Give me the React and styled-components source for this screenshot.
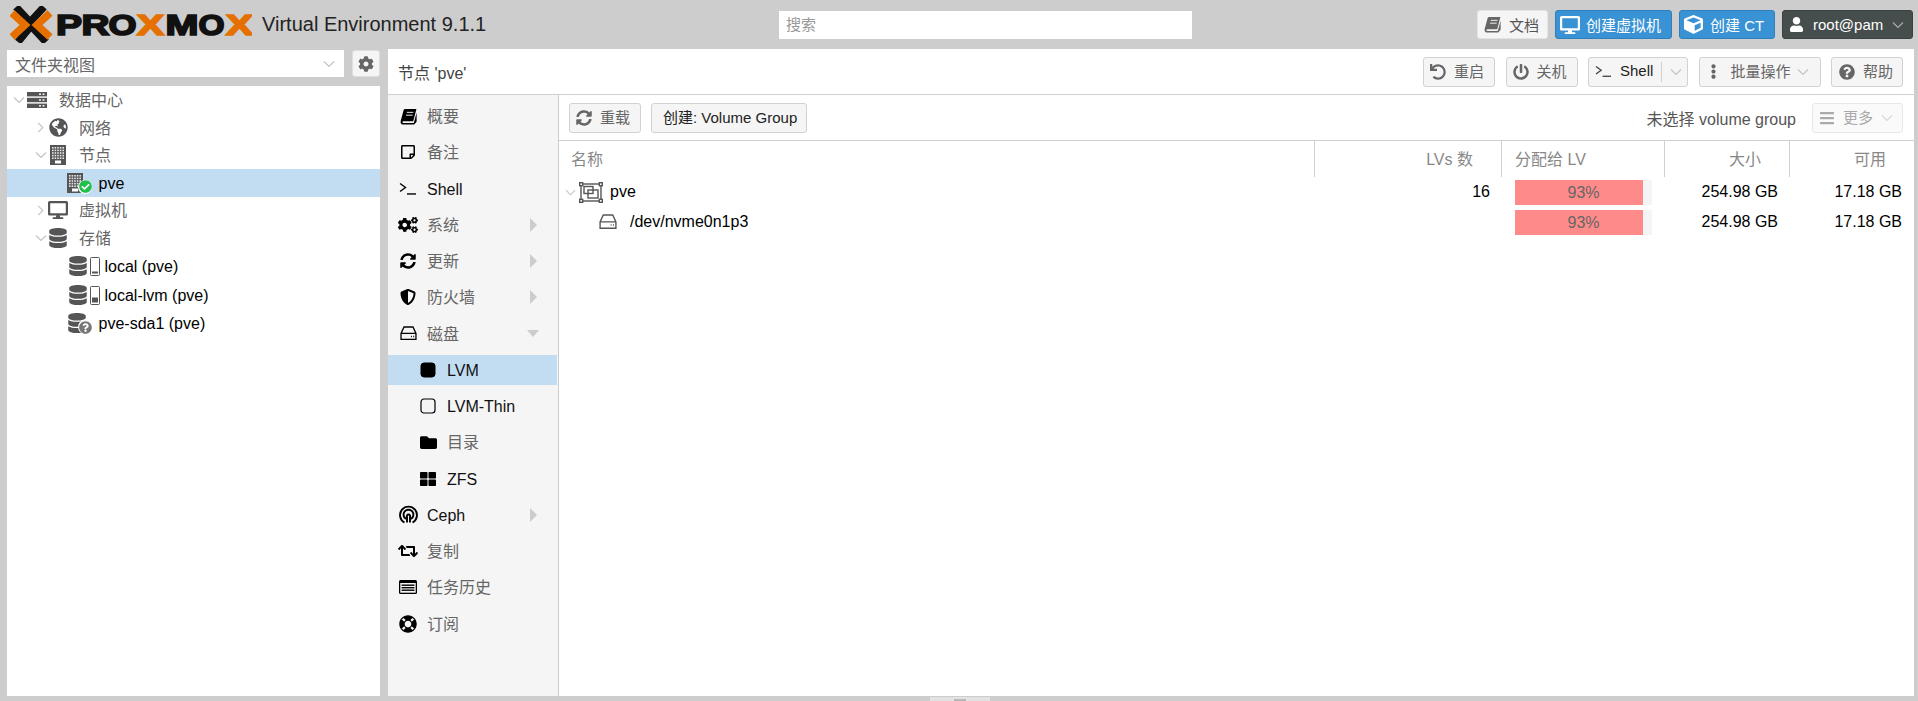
import React from "react"
import styled, { createGlobalStyle } from "styled-components"
import {
  FaDesktop,
  FaCube,
  FaUser,
  FaCog,
  FaCogs,
  FaGlobeAmericas,
  FaDatabase,
  FaSyncAlt,
  FaUndo,
  FaPowerOff,
  FaEllipsisV,
  FaQuestionCircle,
  FaBars,
  FaShieldAlt,
  FaFolder,
  FaThLarge,
  FaRetweet,
  FaLifeRing,
  FaRegStickyNote,
  FaCheckCircle,
} from "react-icons/fa"

const GlobalStyle = createGlobalStyle`
  html, body {
    margin: 0;
    padding: 0;
    background: #cdcdcd;
  }
  * {
    box-sizing: border-box;
  }
`

const Page = styled.div`
  position: relative;
  width: 1918px;
  height: 701px;
  overflow: hidden;
  background: #cdcdcd;
  font-family: "Liberation Sans", "Noto Sans CJK SC", sans-serif;
  font-size: 16px;
  color: #000;
  display: flex;
  flex-direction: column;
`

const TopBar = styled.header`
  height: 49px;
  flex: none;
  display: flex;
  align-items: center;
  padding: 0 5px 0 10px;
`

const LogoSvg = styled.svg`
  width: 242px;
  height: 37px;
  flex: none;
`

const ProductName = styled.div`
  width: 527px;
  flex: none;
  padding-left: 10px;
  font-size: 20px;
  color: #222;
`

const SearchBox = styled.div`
  width: 413px;
  height: 28px;
  background: #fff;
  padding: 0 7px;
  line-height: 28px;
  color: #999;
  font-size: 15px;
`

const TopActions = styled.div`
  margin-left: auto;
  display: flex;
  gap: 7px;
`

const TopButton = styled.div`
  height: 29px;
  width: ${(p) => p.$w}px;
  display: flex;
  align-items: center;
  gap: ${(p) => p.$gap || 8}px;
  padding-left: ${(p) => p.$pad || 6}px;
  border-radius: 3px;
  border: 1px solid ${(p) => (p.$kind === "primary" ? "#2f7fbd" : p.$kind === "dark" ? "#3c4242" : "#e4e4e4")};
  background: ${(p) => (p.$kind === "primary" ? "#3892d4" : p.$kind === "dark" ? "#464d4d" : "#f5f5f5")};
  color: ${(p) => (p.$kind === "primary" || p.$kind === "dark" ? "#fff" : "#555")};
  font-size: 15px;
  white-space: nowrap;
  svg {
    flex: none;
  }
`

const Content = styled.div`
  flex: 1;
  min-height: 0;
  display: flex;
  padding: 0 4px 5px 7px;
  gap: 8px;
`

const LeftColumn = styled.aside`
  width: 373px;
  flex: none;
  display: flex;
  flex-direction: column;
  padding-top: 1px;
`

const ViewRow = styled.div`
  height: 27px;
  flex: none;
  display: flex;
  justify-content: space-between;
`

const ViewSelect = styled.div`
  width: 337px;
  background: #fff;
  display: flex;
  align-items: center;
  justify-content: space-between;
  padding: 0 9px 0 8px;
  color: #666;
`

const GearButton = styled.div`
  width: 28px;
  background: #f5f5f5;
  border: 1px solid #dedede;
  border-radius: 3px;
  display: flex;
  align-items: center;
  justify-content: center;
  color: #666;
`

const Tree = styled.div`
  flex: 1;
  margin-top: 9px;
  background: #fff;
  padding-top: 0.5px;
`

const TreeRow = styled.div`
  height: ${(p) => (p.$tall ? 29 : 27.5)}px;
  display: flex;
  align-items: center;
  padding-left: ${(p) => p.$pad}px;
  background: ${(p) => (p.$selected ? "#c2ddf2" : "transparent")};
`

const ChevronSlot = styled.span`
  width: ${(p) => p.$w}px;
  flex: none;
  display: flex;
  align-items: center;
`

const IconSlot = styled.span`
  position: relative;
  width: ${(p) => p.$w}px;
  margin-left: ${(p) => p.$offset || 0}px;
  height: 22px;
  flex: none;
  display: flex;
  align-items: center;
  justify-content: ${(p) => p.$align || "center"};
  color: ${(p) => p.$color || "#555"};
`

const Badge = styled.span`
  position: absolute;
  right: -1px;
  bottom: 0;
  width: 14px;
  height: 14px;
  border-radius: 50%;
  background: #fff;
  display: flex;
  align-items: center;
  justify-content: center;
  color: ${(p) => p.$color};
`

// Chinese glyphs sit lower than the Latin ones in this font stack, the padding evens them out
const RowLabel = styled.span`
  margin-left: ${(p) => p.$gap}px;
  white-space: nowrap;
  color: ${(p) => (p.$zh ? "#666" : "#000")};
  padding-${(p) => (p.$zh ? "bottom" : "top")}: 2px;
`

const CellLabel = styled.span`
  margin-left: ${(p) => p.$gap}px;
  white-space: nowrap;
`

const MainPanel = styled.main`
  flex: 1;
  min-width: 0;
  background: #fff;
  display: flex;
  flex-direction: column;
`

const TitleBar = styled.div`
  height: 46px;
  flex: none;
  display: flex;
  align-items: center;
  justify-content: space-between;
  padding: 0 11px 0 10px;
  border-bottom: 1px solid #d0d0d0;
`

const Title = styled.div`
  color: #444;
`

const ButtonRow = styled.div`
  display: flex;
  gap: ${(p) => p.$gap || 10}px;
`

const ToolButton = styled.div`
  height: 30px;
  width: ${(p) => p.$w}px;
  display: flex;
  align-items: center;
  gap: ${(p) => p.$gap || 8}px;
  padding-left: ${(p) => p.$pad || 6}px;
  border: 1px solid #d2d2d2;
  border-radius: 3px;
  background: ${(p) => (p.$disabled ? "#fafafa" : "#f5f5f5")};
  color: ${(p) => (p.$disabled ? "#aaa" : p.$muted ? "#666" : "#222")};
  font-size: 15px;
  white-space: nowrap;
  border-color: ${(p) => (p.$disabled ? "#e8e8e8" : "#d2d2d2")};
  svg {
    flex: none;
    color: ${(p) => (p.$disabled ? "#aaa" : "#666")};
  }
`

const ButtonText = styled.span`
  padding-bottom: 2px;
`

const ButtonDivider = styled.span`
  width: 1px;
  height: 20px;
  background: #d0d0d0;
`

const CaretSlot = styled.span`
  display: flex;
  margin-left: ${(p) => p.$shift || 0}px;
`

const Body = styled.div`
  flex: 1;
  min-height: 0;
  display: flex;
`

const Nav = styled.nav`
  width: 171px;
  flex: none;
  background: #f5f5f5;
  border-right: 1px solid #cdcdcd;
  padding-top: 6px;
  display: flex;
  flex-direction: column;
  gap: 6.25px;
`

const NavItem = styled.div`
  position: relative;
  height: 30px;
  flex: none;
  width: 169px;
  display: flex;
  align-items: center;
  padding-left: ${(p) => (p.$sub ? 30 : 10)}px;
  background: ${(p) => (p.$selected ? "#c2ddf2" : "transparent")};
`

const NavIcon = styled.span`
  width: 20px;
  flex: none;
  display: flex;
  justify-content: center;
  color: #000;
`

const NavLabel = styled.span`
  margin-left: 9px;
  color: ${(p) => (p.$zh ? "#666" : "#111")};
  padding-${(p) => (p.$zh ? "bottom" : "top")}: 2px;
`

const NavArrow = styled.span`
  position: absolute;
  width: 0;
  height: 0;
  ${(p) =>
    p.$open
      ? `left: 139px; border-left: 6px solid transparent; border-right: 6px solid transparent; border-top: 7px solid #ccc;`
      : `left: 142px; border-top: 7px solid transparent; border-bottom: 7px solid transparent; border-left: 7px solid #ccc;`}
`

const GridArea = styled.section`
  flex: 1;
  min-width: 0;
  display: flex;
  flex-direction: column;
`

const Toolbar = styled.div`
  height: 46px;
  flex: none;
  display: flex;
  align-items: center;
  justify-content: space-between;
  padding: 0 11px 0 10px;
  border-bottom: 1px solid #d0d0d0;
`

const ToolbarRight = styled.div`
  display: flex;
  align-items: center;
  gap: 16px;
  color: #555;
`

const columns = "756px 187px 163px 125px 124px"

const GridHeader = styled.div`
  height: 36px;
  flex: none;
  display: grid;
  grid-template-columns: ${columns};
`

const HeaderCell = styled.div`
  display: flex;
  align-items: center;
  justify-content: ${(p) => (p.$right ? "flex-end" : "flex-start")};
  padding: ${(p) => (p.$right ? "0 28px 2px 0" : `0 0 2px ${p.$pad}px`)};
  color: #888;
  border-right: ${(p) => (p.$last ? "none" : "1px solid #d0d0d0")};
`

const GridRow = styled.div`
  height: 30px;
  display: grid;
  grid-template-columns: ${columns};
  align-items: center;
`

const NameCell = styled.div`
  display: flex;
  align-items: center;
  padding-left: ${(p) => p.$pad}px;
`

const ValueCell = styled.div`
  text-align: right;
  padding-right: 12px;
`

const BarCell = styled.div`
  padding-left: 13px;
`

const Bar = styled.div`
  position: relative;
  width: 137px;
  height: 25px;
  background: #f5f5f5;
`

const BarFill = styled.div`
  height: 100%;
  background: #ff8a8a;
`

const BarText = styled.span`
  position: absolute;
  left: 0;
  right: 0;
  top: 0;
  line-height: 25px;
  text-align: center;
  color: #666;
`

const SplitHandle = styled.div`
  position: absolute;
  left: 930px;
  top: 697px;
  width: 60px;
  height: 4px;
  background: #e2e2e2;
  display: flex;
  justify-content: center;
  padding-top: 2px;
`

const SplitGrip = styled.span`
  width: 12px;
  height: 2px;
  background: #b8b8b8;
`

const Chevron = ({ dir = "down", size = 12, color = "#c4c4c4" }) => (
  <svg width={size} height={size} viewBox="0 0 12 12" fill="none" stroke={color} strokeWidth="1.2">
    {dir === "down" ? <polyline points="1,3.5 6,8.5 11,3.5" /> : <polyline points="3.5,1 8.5,6 3.5,11" />}
  </svg>
)

const ShellIcon = ({ size = 18, color = "#000" }) => (
  <svg width={size} height={size * 0.72} viewBox="0 0 18 13" fill="none" stroke={color} strokeWidth="1.4">
    <polyline points="1,1.5 6.5,5.5 1,9.5" />
    <line x1="8" y1="12" x2="17" y2="12" />
  </svg>
)

const BookIcon = ({ size = 17, color = "#000", ink = "#f5f5f5" }) => (
  <svg width={size} height={size} viewBox="0 0 18 18">
    <path
      d="M5.6 1H17.4L14 14H3.7C2.3 14 2.1 15.9 3.6 15.9H14.6L17.6 5V14.6L15 17.5H3C1 17.5 .2 15.5 .8 13.5L3.8 2.5C4 1.6 4.7 1 5.6 1Z"
      fill={color}
    />
    <path d="M7.2 4.6H14.2M6.4 7.6H13.4" stroke={ink} strokeWidth="1" />
  </svg>
)

const HddIcon = ({ size = 17, color = "currentColor" }) => (
  <svg width={size} height={size * 0.85} viewBox="0 0 17 14.5" fill="none" stroke={color} strokeWidth="1.3">
    <path d="M4 1H13L16 7.5V13.5H1V7.5L4 1ZM1 7.5H16" />
    <path d="M11 10.5H11.9M13.3 10.5H14.2" strokeWidth="1.4" />
  </svg>
)

const ServerIcon = () => (
  <svg width="20" height="16" viewBox="0 0 20 16">
    {[0, 5.8, 11.6].map((y) => (
      <g key={y}>
        <rect y={y} width="20" height="4.4" fill="#555" />
        <rect x="12" y={y + 1.5} width="2" height="1.4" fill="#fff" />
        <rect x="15.5" y={y + 1.5} width="2" height="1.4" fill="#fff" />
      </g>
    ))}
  </svg>
)

const TaskListIcon = () => (
  <svg width="18" height="14" viewBox="0 0 18 14">
    <rect width="18" height="14" rx="1.5" fill="#000" />
    <rect x="1.3" y="3" width="15.4" height="9.7" fill="#f5f5f5" />
    {[4.5, 7, 9.5].map((y) => (
      <rect key={y} x="2.6" y={y} width="12.8" height="1.4" fill="#000" />
    ))}
  </svg>
)

const NodeBuilding = ({ w = 16, h = 20 }) => (
  <svg width={w} height={h} viewBox="0 0 16 20">
    <rect width="16" height="20" fill="#555" />
    {[2, 4.6, 7.2, 9.8, 12.4].map((y) =>
      [2, 4.6, 7.2, 9.8, 12.4].map((x) => (
        <rect key={`${x}-${y}`} x={x} y={y} width="1.6" height="1.6" fill="#fff" opacity="0.85" />
      )),
    )}
    <rect x="5" y="15.5" width="6" height="3" fill="#fff" />
  </svg>
)

const StorageBar = ({ fill }) => (
  <svg width="10" height="19" viewBox="0 0 10 19">
    <rect x="0.5" y="0.5" width="9" height="18" rx="1" fill="#fff" stroke="#555" />
    <rect x="2" y={16.5 - fill} width="6" height={fill} fill="#555" />
  </svg>
)

const VolumeGroupIcon = () => (
  <svg width="24" height="21" viewBox="0 0 24 21" fill="none" stroke="#555" strokeWidth="1.4">
    <rect x="2" y="2" width="20" height="17" />
    <rect x="5" y="4.5" width="9" height="7" />
    <rect x="9" y="8" width="10" height="8" />
    {[
      [0.7, 0.7],
      [20.3, 0.7],
      [0.7, 17.3],
      [20.3, 17.3],
    ].map(([x, y]) => (
      <rect key={`${x}-${y}`} x={x} y={y} width="3" height="3" fill="#fff" />
    ))}
  </svg>
)

const CephIcon = () => (
  <svg width="19" height="19" viewBox="0 0 18 18" fill="none" stroke="#000" strokeWidth="1.8">
    <path d="M5.2 16.6A8 8 0 1 1 12.8 16.6" />
    <path d="M6.6 13.2A4.7 4.7 0 1 1 11.4 13.2" />
    <path d="M7.6 16.6V11.4A1.6 1.6 0 1 1 10.4 11.4V16.6" />
  </svg>
)

const RoundedSquare = ({ filled }) => (
  <svg width="16" height="16" viewBox="0 0 16 16">
    <rect
      x="1"
      y="1"
      width="14"
      height="14"
      rx="3"
      fill={filled ? "#000" : "none"}
      stroke="#000"
      strokeWidth={filled ? 1 : 1.2}
    />
  </svg>
)

const logoLetters = [
  ["P", 56, 26, "#111"],
  ["R", 81.5, 28, "#111"],
  ["O", 108.5, 28, "#111"],
  ["X", 137, 27, "#e57000"],
  ["M", 165.5, 33, "#111"],
  ["O", 198.5, 26, "#111"],
  ["X", 226, 27, "#e57000"],
]

const Logo = () => (
  <LogoSvg viewBox="10 5 242 37">
    <g fill="none" strokeWidth="7.5">
      <polyline points="16,6 30,21 44,6" stroke="#111" />
      <polyline points="18,41 31,25 46,41" stroke="#111" />
      <polyline points="12,12 25,24 12,36" stroke="#e57000" />
      <polyline points="50,12 37,24 50,36" stroke="#e57000" />
    </g>
    {logoLetters.map(([ch, x, w, color]) => (
      <text
        key={x}
        x={x}
        y="34"
        fontFamily="Liberation Sans"
        fontWeight="700"
        fontSize="29"
        fill={color}
        stroke={color}
        strokeWidth="1.7"
        textLength={w}
        lengthAdjust="spacingAndGlyphs"
      >
        {ch}
      </text>
    ))}
  </LogoSvg>
)

const treeRows = [
  { label: "数据中心", zh: true, pad: 6, chev: "down", chevW: 14, iconW: 20, gap: 12, icon: <ServerIcon /> },
  { label: "网络", zh: true, pad: 28, chev: "right", chevW: 13, iconW: 20, gap: 11, icon: <FaGlobeAmericas size={19} /> },
  { label: "节点", zh: true, pad: 28, chev: "down", chevW: 13, iconW: 20, gap: 11, icon: <NodeBuilding /> },
  {
    label: "pve",
    pad: 60,
    iconW: 24,
    gap: 7.5,
    selected: true,
    icon: <NodeBuilding />,
    align: "flex-start",
    badge: <FaCheckCircle size={13} />,
    badgeColor: "#21bf4b",
  },
  { label: "虚拟机", zh: true, pad: 28, chev: "right", chevW: 13, iconW: 20, gap: 11, icon: <FaDesktop size={22} /> },
  { label: "存储", zh: true, pad: 28, chev: "down", chevW: 13, iconW: 20, gap: 11, icon: <FaDatabase size={20} /> },
  {
    label: "local (pve)",
    pad: 61,
    iconW: 32,
    gap: 4.5,
    tall: true,
    align: "space-between",
    icon: (
      <>
        <FaDatabase size={20} />
        <StorageBar fill={2} />
      </>
    ),
  },
  {
    label: "local-lvm (pve)",
    pad: 61,
    iconW: 32,
    gap: 4.5,
    tall: true,
    align: "space-between",
    icon: (
      <>
        <FaDatabase size={20} />
        <StorageBar fill={5} />
      </>
    ),
  },
  {
    label: "pve-sda1 (pve)",
    pad: 60,
    iconW: 24,
    gap: 7.5,
    align: "flex-start",
    icon: <FaDatabase size={20} />,
    badge: <FaQuestionCircle size={13} />,
    badgeColor: "#777",
  },
]

const navItems = [
  { label: "概要", zh: true, icon: <BookIcon /> },
  { label: "备注", zh: true, icon: <FaRegStickyNote size={16} /> },
  { label: "Shell", icon: <ShellIcon /> },
  { label: "系统", zh: true, icon: <FaCogs size={20} />, arrow: "right" },
  { label: "更新", zh: true, icon: <FaSyncAlt size={16} />, arrow: "right" },
  { label: "防火墙", zh: true, icon: <FaShieldAlt size={16} />, arrow: "right" },
  { label: "磁盘", zh: true, icon: <HddIcon />, arrow: "open" },
  { label: "LVM", sub: true, selected: true, icon: <RoundedSquare filled /> },
  { label: "LVM-Thin", sub: true, icon: <RoundedSquare /> },
  { label: "目录", zh: true, sub: true, icon: <FaFolder size={17} /> },
  { label: "ZFS", sub: true, icon: <FaThLarge size={16} /> },
  { label: "Ceph", icon: <CephIcon />, arrow: "right" },
  { label: "复制", zh: true, icon: <FaRetweet size={20} /> },
  { label: "任务历史", zh: true, icon: <TaskListIcon /> },
  { label: "订阅", zh: true, icon: <FaLifeRing size={18} /> },
]

export default function App() {
  return (
    <Page>
      <GlobalStyle />
      <TopBar>
        <Logo />
        <ProductName>Virtual Environment 9.1.1</ProductName>
        <SearchBox>搜索</SearchBox>
        <TopActions>
          <TopButton $w={71}>
            <BookIcon color="#666" /> 文档
          </TopButton>
          <TopButton $w={117} $kind="primary" $pad={4} $gap={6}>
            <FaDesktop size={20} /> 创建虚拟机
          </TopButton>
          <TopButton $w={96} $kind="primary" $pad={4} $gap={7}>
            <FaCube size={19} /> 创建 CT
          </TopButton>
          <TopButton $w={131} $kind="dark" $pad={6} $gap={9}>
            <FaUser size={15} /> root@pam
            <CaretSlot>
              <Chevron color="#aaa" />
            </CaretSlot>
          </TopButton>
        </TopActions>
      </TopBar>
      <Content>
        <LeftColumn>
          <ViewRow>
            <ViewSelect>
              文件夹视图
              <Chevron />
            </ViewSelect>
            <GearButton>
              <FaCog size={16} />
            </GearButton>
          </ViewRow>
          <Tree>
            {treeRows.map((row) => (
              <TreeRow key={row.label} $pad={row.pad} $selected={row.selected} $tall={row.tall}>
                {row.chev && (
                  <ChevronSlot $w={row.chevW}>
                    <Chevron dir={row.chev} size={row.chev === "down" ? 12 : 11} />
                  </ChevronSlot>
                )}
                <IconSlot $w={row.iconW} $align={row.align}>
                  {row.icon}
                  {row.badge && <Badge $color={row.badgeColor}>{row.badge}</Badge>}
                </IconSlot>
                <RowLabel $gap={row.gap} $zh={row.zh}>
                  {row.label}
                </RowLabel>
              </TreeRow>
            ))}
          </Tree>
        </LeftColumn>
        <MainPanel>
          <TitleBar>
            <Title>节点 'pve'</Title>
            <ButtonRow $gap={10.5}>
              <ToolButton $w={72} $muted>
                <FaUndo size={16} />
                <ButtonText>重启</ButtonText>
              </ToolButton>
              <ToolButton $w={72} $muted>
                <FaPowerOff size={16} />
                <ButtonText>关机</ButtonText>
              </ToolButton>
              <ToolButton $w={100} $gap={8}>
                <ShellIcon size={17} color="#444" />
                <ButtonText>Shell</ButtonText>
                <ButtonDivider />
                <Chevron />
              </ToolButton>
              <ToolButton $w={122} $gap={10} $muted>
                <FaEllipsisV size={15} />
                <ButtonText>批量操作</ButtonText>
                <CaretSlot $shift={-4}>
                  <Chevron />
                </CaretSlot>
              </ToolButton>
              <ToolButton $w={72} $pad={7} $muted>
                <FaQuestionCircle size={16} />
                <ButtonText>帮助</ButtonText>
              </ToolButton>
            </ButtonRow>
          </TitleBar>
          <Body>
            <Nav>
              {navItems.map((item) => (
                <NavItem key={item.label} $sub={item.sub} $selected={item.selected}>
                  <NavIcon>{item.icon}</NavIcon>
                  <NavLabel $zh={item.zh}>{item.label}</NavLabel>
                  {item.arrow && <NavArrow $open={item.arrow === "open"} />}
                </NavItem>
              ))}
            </Nav>
            <GridArea>
              <Toolbar>
                <ButtonRow>
                  <ToolButton $w={72} $muted>
                    <FaSyncAlt size={16} />
                    <ButtonText>重载</ButtonText>
                  </ToolButton>
                  <ToolButton $w={156} $pad={11}>
                    <ButtonText>创建: Volume Group</ButtonText>
                  </ToolButton>
                </ButtonRow>
                <ToolbarRight>
                  <span>未选择 volume group</span>
                  <ToolButton $w={91} $disabled>
                    <FaBars size={16} />
                    <ButtonText>更多</ButtonText>
                    <Chevron color="#d8d8d8" />
                  </ToolButton>
                </ToolbarRight>
              </Toolbar>
              <GridHeader>
                <HeaderCell $pad={12}>名称</HeaderCell>
                <HeaderCell $right>LVs 数</HeaderCell>
                <HeaderCell $pad={13}>分配给 LV</HeaderCell>
                <HeaderCell $right>大小</HeaderCell>
                <HeaderCell $right $last>
                  可用
                </HeaderCell>
              </GridHeader>
              <GridRow>
                <NameCell $pad={6}>
                  <Chevron size={11} />
                  <IconSlot $w={24} $align="flex-start" $offset={3}>
                    <VolumeGroupIcon />
                  </IconSlot>
                  <CellLabel $gap={7}>pve</CellLabel>
                </NameCell>
                <ValueCell>16</ValueCell>
                <BarCell>
                  <Bar>
                    <BarFill style={{ width: "93.5%" }} />
                    <BarText>93%</BarText>
                  </Bar>
                </BarCell>
                <ValueCell>254.98 GB</ValueCell>
                <ValueCell>17.18 GB</ValueCell>
              </GridRow>
              <GridRow>
                <NameCell $pad={40}>
                  <IconSlot $w={18}>
                    <HddIcon size={18} color="#555" />
                  </IconSlot>
                  <CellLabel $gap={13}>/dev/nvme0n1p3</CellLabel>
                </NameCell>
                <ValueCell />
                <BarCell>
                  <Bar>
                    <BarFill style={{ width: "93.5%" }} />
                    <BarText>93%</BarText>
                  </Bar>
                </BarCell>
                <ValueCell>254.98 GB</ValueCell>
                <ValueCell>17.18 GB</ValueCell>
              </GridRow>
            </GridArea>
          </Body>
        </MainPanel>
      </Content>
      <SplitHandle>
        <SplitGrip />
      </SplitHandle>
    </Page>
  )
}
